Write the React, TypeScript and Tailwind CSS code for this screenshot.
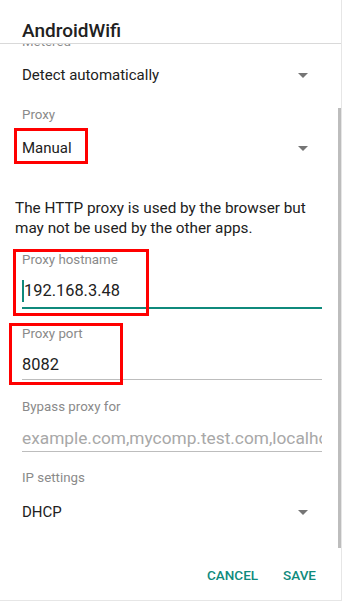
import React from "react";

function Arrow() {
  return (
    <svg width="10" height="5" viewBox="0 0 10 5" className="mr-[14px] shrink-0">
      <path d="M0 0 L10 0 L5 5 Z" fill="#757575" />
    </svg>
  );
}

function Label({ text, className = "" }: { text: string; className?: string }) {
  return <div className={`h-[16px] text-[13.3px] leading-[16px] text-[#8a8a8a] ${className}`}>{text}</div>;
}

function Spinner({ value }: { value: string }) {
  return (
    <div className="h-[48px] flex items-center justify-between">
      <span className="text-[15px] leading-[20px] text-[#212121]">{value}</span>
      <Arrow />
    </div>
  );
}

export default function App() {
  return (
    <div
      className="relative w-[342px] h-[601px] bg-white border-r border-b border-[#e6e6e6] flex flex-col overflow-hidden"
      style={{ fontFamily: "Roboto, 'Liberation Sans', sans-serif" }}
    >
      {/* title */}
      <div className="h-[44px] shrink-0 border-b border-[#d9d9d9] pl-[22px] pt-[19px] relative z-10 bg-white">
        <div className="text-[19px] leading-[24px] font-medium text-[#212121]">AndroidWifi</div>
      </div>

      {/* scrolling body */}
      <div className="relative h-[504px] shrink-0 overflow-hidden">
        <div className="pl-[22px] pr-[19px]">
          <Label text="Metered" className="mt-[-10px]" />
          <div className="mt-[1px]">
            <Spinner value="Detect automatically" />
          </div>

          <Label text="Proxy" className="mt-[8px]" />
          <div className="mt-[1px]">
            <Spinner value="Manual" />
          </div>

          <p className="mt-[26px] ml-[-7px] text-[15.3px] leading-[20px] text-[#212121]">
            The HTTP proxy is used by the browser but
            <br />
            may not be used by the other apps.
          </p>

          <Label text="Proxy hostname" className="mt-[14px]" />
          <div className="relative pt-[13px] pb-[6px] border-b-2 border-[#0f8a7c]">
            <div className="text-[16.4px] leading-[20px] text-[#212121] pl-[2px]">192.168.3.48</div>
            <span className="absolute left-0 top-[12px] w-[2px] h-[22px] bg-[#0f8a7c]" />
          </div>

          <Label text="Proxy port" className="mt-[17px]" />
          <div className="pt-[13px] pb-[4px] border-b border-[#bdbdbd]">
            <div className="text-[16.4px] leading-[20px] text-[#212121]">8082</div>
          </div>

          <Label text="Bypass proxy for" className="mt-[19px]" />
          <div className="pt-[13px] pb-[3px] border-b border-[#bdbdbd] overflow-hidden">
            <div className="text-[17.3px] leading-[20px] text-[#a8a8a8] whitespace-nowrap">
              example.com,mycomp.test.com,localhost
            </div>
          </div>

          <Label text="IP settings" className="mt-[18px]" />
          <div className="mt-[2px]">
            <Spinner value="DHCP" />
          </div>
        </div>

        {/* scrollbar */}
        <div className="absolute right-0 top-[64px] w-[3px] h-[440px] bg-[#bdbdbd]" />
      </div>

      {/* buttons */}
      <div className="flex-1 flex items-center justify-end gap-[25px] pr-[25px] pt-[2px]">
        <span className="text-[13.5px] font-medium text-[#0f8a7c]">CANCEL</span>
        <span className="text-[13.5px] font-medium text-[#0f8a7c]">SAVE</span>
      </div>

      {/* red annotation boxes */}
      <div className="absolute left-[14px] top-[128px] w-[74px] h-[36px] border-[3px] border-[#ff0000]" />
      <div className="absolute left-[13px] top-[249px] w-[136px] h-[67px] border-[3px] border-[#ff0000]" />
      <div className="absolute left-[9px] top-[323px] w-[114px] h-[62px] border-[3px] border-[#ff0000]" />
    </div>
  );
}
